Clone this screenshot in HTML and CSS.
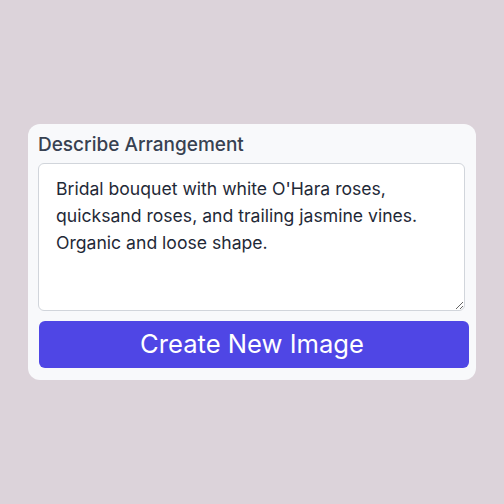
FILE: index.html
```html
<!DOCTYPE html>
<html>
<head>
<meta charset="utf-8">
<link rel="stylesheet" href="styles.css">
</head>
<body>
<div class="card">
  <label class="label" for="desc">Describe Arrangement</label>
  <textarea id="desc" class="input">Bridal bouquet with white O'Hara roses, quicksand roses, and trailing jasmine vines. Organic and loose shape.</textarea>
  <button class="btn">Create New Image</button>
</div>
</body>
</html>
```

FILE: styles.css
```css
html, body {
  margin: 0;
  padding: 0;
  height: 100%;
}
body {
  background: #dcd3da;
  display: flex;
  align-items: center;
  justify-content: center;
  font-family: Inter, "Noto Sans", sans-serif;
}
.card {
  box-sizing: border-box;
  width: 448px;
  height: 256px;
  background: #f8f9fb;
  border-radius: 12px;
  padding: 9px 6px 12px 10px;
  display: flex;
  flex-direction: column;
}
.label {
  font-size: 19px;
  font-weight: 500;
  color: #374151;
  line-height: 24px;
  margin-bottom: 6px;
}
.input {
  box-sizing: border-box;
  width: 427px;
  height: 148px;
  border: 1px solid #d1d5db;
  border-radius: 6px;
  background: #fff;
  padding: 12px 17px;
  font-family: Inter, "Noto Sans", sans-serif;
  font-size: 17.6px;
  line-height: 26.8px;
  color: #1f2937;
  margin: 0;
  resize: vertical;
  outline: none;
}
.btn {
  margin-top: 10px;
  margin-left: 1px;
  width: 430px;
  height: 47px;
  border: none;
  border-radius: 6px;
  background: #4f46e5;
  color: #fff;
  font-family: Inter, "Noto Sans", sans-serif;
  font-size: 25.6px;
  font-weight: 400;
  padding: 0 4px 3px 0;
}
```
